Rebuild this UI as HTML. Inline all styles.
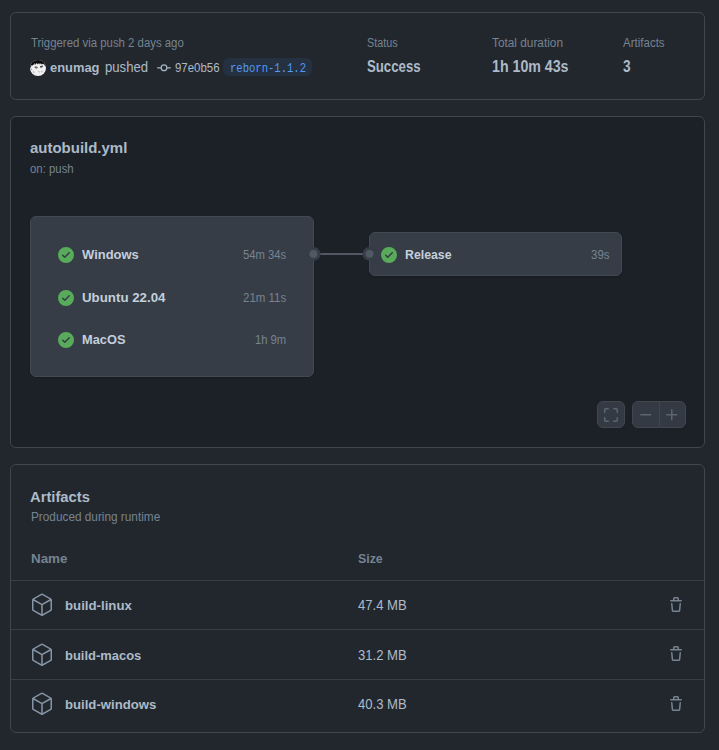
<!DOCTYPE html>
<html lang="en"><head><meta charset="utf-8"><title>autobuild.yml · Actions</title>
<style>
html,body{margin:0;padding:0}
html{background:#22272e}
body{width:719px;height:750px;background:#22272e;position:relative;overflow:hidden;font-family:"Liberation Sans",sans-serif;color:#adbac7}
.card{position:absolute;left:10px;width:695px;box-sizing:border-box;border:1px solid #3f4650;border-radius:6px}
.t{position:absolute;white-space:pre;transform-origin:0 50%;display:block}
.i{position:absolute;display:block;overflow:visible}
.box{position:absolute;box-sizing:border-box;background:#363d47;border:1px solid #414953;border-radius:6px;box-shadow:0 1px 2px rgba(0,0,0,.18)}
.edge{position:absolute;background:#4f5863}
.badge{position:absolute;border-radius:6px;background:#253040}
.sep{position:absolute;width:693px;height:1px;background:#373e47}
.btn{position:absolute;box-sizing:border-box;background:#333a43;border:1px solid #40474f}
</style></head><body>
<section class="card summary" style="top:12px;height:88px">
<div class="badge" style="left:212px;top:45px;width:89px;height:18px"></div>
<svg class="i" style="left:19px;top:47px" width="16" height="16" viewBox="0 0 16 16">
<defs><clipPath id="av"><circle cx="8" cy="8" r="8"/></clipPath></defs>
<g clip-path="url(#av)">
<rect width="16" height="16" fill="#f0f0f0"/>
<path d="M-1 8.6 0.7 7.6 1.6 5 2.5 5.8 3.2 4.2 4 5.2 4.7 3 5.7 4.9 6.4 2.8 7.4 4.6 8.1 2.9 9.1 4.4 10 3.1 11 4.5 11.9 3.4 12.9 4.6 14 3.8 14.8 5.8 17 7.4V-1H-1Z" fill="#0c0c0c"/>
<ellipse cx="6.2" cy="7.4" rx="1.7" ry="1" fill="#6a6a6a" transform="rotate(8 6.2 7.4)"/>
<ellipse cx="11.5" cy="6.6" rx="1.6" ry="1" fill="#444" transform="rotate(-18 11.5 6.6)"/>
<path d="M8.4 11.4l.9.5.9-.4" stroke="#9a9a9a" stroke-width=".7" fill="none"/>
<path d="M1 8.6l1 1.2M3 11.4l1.2 1.2M12.4 11l-.8 1.2" stroke="#a8a8a8" stroke-width="1.1" fill="none"/>
</g></svg>
<svg class="i" style="left:146.4px;top:47.7px" width="14" height="14" viewBox="0 0 16 16" fill="#a7b4c1"><path d="M11.93 8.5a4.002 4.002 0 0 1-7.86 0H.75a.75.75 0 0 1 0-1.5h3.32a4.002 4.002 0 0 1 7.86 0h3.32a.75.75 0 0 1 0 1.5Zm-1.43-.75a2.5 2.5 0 1 0-5 0 2.5 2.5 0 0 0 5 0Z"/></svg>
<span class="t" style="left:19.6px;top:24.14px;font:400 12px/12px 'Liberation Sans', sans-serif;color:#768390;transform:scaleX(0.9491)">Triggered via push 2 days ago</span>
<span class="t" style="left:39px;top:47.86px;font:700 13.4px/13.4px 'Liberation Sans', sans-serif;color:#adbac7;transform:scaleX(0.9641)">enumag</span>
<span class="t" style="left:93.7px;top:47.35px;font:400 14px/14px 'Liberation Sans', sans-serif;color:#adbac7;transform:scaleX(0.9382)">pushed</span>
<span class="t" style="left:163.8px;top:48.84px;font:400 12px/12px 'Liberation Sans', sans-serif;color:#adbac7;transform:scaleX(0.9525)">97e0b56</span>
<span class="t" style="left:219px;top:49.61px;font:400 12px/12px 'Liberation Mono', monospace;color:#539bf5;transform:scaleX(0.8794)">reborn-1.1.2</span>
<span class="t" style="left:356px;top:24.14px;font:400 12px/12px 'Liberation Sans', sans-serif;color:#768390;transform:scaleX(0.8992)">Status</span>
<span class="t" style="left:356px;top:45.83px;font:700 15.8px/15.8px 'Liberation Sans', sans-serif;color:#adbac7;transform:scaleX(0.8359)">Success</span>
<span class="t" style="left:480.6px;top:24.14px;font:400 12px/12px 'Liberation Sans', sans-serif;color:#768390;transform:scaleX(0.9855)">Total duration</span>
<span class="t" style="left:480.6px;top:45.83px;font:700 15.8px/15.8px 'Liberation Sans', sans-serif;color:#adbac7;transform:scaleX(0.8980)">1h 10m 43s</span>
<span class="t" style="left:611.9px;top:24.14px;font:400 12px/12px 'Liberation Sans', sans-serif;color:#768390;transform:scaleX(0.9598)">Artifacts</span>
<span class="t" style="left:611.9px;top:45.83px;font:700 15.8px/15.8px 'Liberation Sans', sans-serif;color:#adbac7;transform:scaleX(0.8639)">3</span>
</section>

<section class="card graph" style="top:116px;height:332px;background:#1c2128">
<div class="box" style="left:19px;top:99px;width:284px;height:161px"></div>
<div class="edge" style="left:303px;top:136px;width:55px;height:2px"></div>
<div class="box" style="left:358px;top:115px;width:253px;height:44px"></div>
<svg class="i" style="left:289px;top:123px" width="90" height="28" viewBox="300 240 90 28">
<circle cx="313.5" cy="253.9" r="7" fill="#363d47"/><circle cx="313.5" cy="253.9" r="4" fill="#4f5863"/>
<circle cx="369.6" cy="253.9" r="7" fill="#363d47"/><circle cx="369.6" cy="253.9" r="3.9" fill="#4f5863"/>
</svg>
<div class="btn" style="left:586px;top:284px;width:28px;height:27px;border-radius:6px"></div>
<div class="btn" style="left:621px;top:284px;width:28px;height:27px;border-radius:6px 0 0 6px"></div>
<div class="btn" style="left:648px;top:284px;width:27px;height:27px;border-radius:0 6px 6px 0"></div>
<svg class="i" style="left:47px;top:130px" width="16" height="16" viewBox="0 0 16 16" fill="#57ab5a"><path d="M8 16A8 8 0 1 1 8 0a8 8 0 0 1 0 16Zm3.78-9.72a.751.751 0 0 0-.018-1.042.751.751 0 0 0-1.042-.018L6.75 9.19 5.28 7.72a.751.751 0 0 0-1.042.018.751.751 0 0 0-.018 1.042l2 2a.75.75 0 0 0 1.06 0Z"/></svg>
<svg class="i" style="left:47px;top:172.7px" width="16" height="16" viewBox="0 0 16 16" fill="#57ab5a"><path d="M8 16A8 8 0 1 1 8 0a8 8 0 0 1 0 16Zm3.78-9.72a.751.751 0 0 0-.018-1.042.751.751 0 0 0-1.042-.018L6.75 9.19 5.28 7.72a.751.751 0 0 0-1.042.018.751.751 0 0 0-.018 1.042l2 2a.75.75 0 0 0 1.06 0Z"/></svg>
<svg class="i" style="left:47px;top:215.4px" width="16" height="16" viewBox="0 0 16 16" fill="#57ab5a"><path d="M8 16A8 8 0 1 1 8 0a8 8 0 0 1 0 16Zm3.78-9.72a.751.751 0 0 0-.018-1.042.751.751 0 0 0-1.042-.018L6.75 9.19 5.28 7.72a.751.751 0 0 0-1.042.018.751.751 0 0 0-.018 1.042l2 2a.75.75 0 0 0 1.06 0Z"/></svg>
<svg class="i" style="left:370px;top:130px" width="16" height="16" viewBox="0 0 16 16" fill="#57ab5a"><path d="M8 16A8 8 0 1 1 8 0a8 8 0 0 1 0 16Zm3.78-9.72a.751.751 0 0 0-.018-1.042.751.751 0 0 0-1.042-.018L6.75 9.19 5.28 7.72a.751.751 0 0 0-1.042.018.751.751 0 0 0-.018 1.042l2 2a.75.75 0 0 0 1.06 0Z"/></svg>
<svg class="i" style="left:592px;top:289.6px" width="16" height="16" viewBox="0 0 16 16" fill="#5c6570"><path d="M1.75 10a.75.75 0 0 1 .75.75v2.5c0 .138.112.25.25.25h2.5a.75.75 0 0 1 0 1.5h-2.5A1.75 1.75 0 0 1 1 13.25v-2.5a.75.75 0 0 1 .75-.75Zm12.5 0a.75.75 0 0 1 .75.75v2.5A1.75 1.75 0 0 1 13.25 15h-2.5a.75.75 0 0 1 0-1.5h2.5a.25.25 0 0 0 .25-.25v-2.5a.75.75 0 0 1 .75-.75ZM2.75 2.5a.25.25 0 0 0-.25.25v2.5a.75.75 0 0 1-1.5 0v-2.5C1 1.784 1.784 1 2.75 1h2.5a.75.75 0 0 1 0 1.5ZM10 1.75a.75.75 0 0 1 .75-.75h2.5c.966 0 1.75.784 1.75 1.75v2.5a.75.75 0 0 1-1.5 0v-2.5a.25.25 0 0 0-.25-.25h-2.5a.75.75 0 0 1-.75-.75Z"/></svg>
<svg class="i" style="left:626.8px;top:289.7px" width="16" height="16" viewBox="0 0 16 16" fill="#5c6570"><path d="M2 7.75A.75.75 0 0 1 2.75 7h10a.75.75 0 0 1 0 1.5h-10A.75.75 0 0 1 2 7.75Z"/></svg>
<svg class="i" style="left:653px;top:289.7px" width="16" height="16" viewBox="0 0 16 16" fill="#5c6570"><path d="M7.75 2a.75.75 0 0 1 .75.75V7h4.25a.75.75 0 0 1 0 1.5H8.5v4.25a.75.75 0 0 1-1.5 0V8.5H2.75a.75.75 0 0 1 0-1.5H7V2.75A.75.75 0 0 1 7.75 2Z"/></svg>
<span class="t" style="left:19.2px;top:23.05px;font:700 15.3px/15.3px 'Liberation Sans', sans-serif;color:#adbac7;transform:scaleX(0.9785)">autobuild.yml</span>
<span class="t" style="left:19.4px;top:45.74px;font:400 12px/12px 'Liberation Sans', sans-serif;color:#768390;transform:scaleX(0.9490)">on: push</span>
<span class="t" style="left:71.2px;top:130.57px;font:700 13.5px/13.5px 'Liberation Sans', sans-serif;color:#c3cfdb;transform:scaleX(0.9607)">Windows</span>
<span class="t" style="left:71px;top:173.77px;font:700 13.5px/13.5px 'Liberation Sans', sans-serif;color:#c3cfdb;transform:scaleX(0.9851)">Ubuntu 22.04</span>
<span class="t" style="left:71px;top:215.97px;font:700 13.5px/13.5px 'Liberation Sans', sans-serif;color:#c3cfdb;transform:scaleX(0.9502)">MacOS</span>
<span class="t" style="left:231.8px;top:131.84px;font:400 12px/12px 'Liberation Sans', sans-serif;color:#768390;transform:scaleX(0.9385)">54m 34s</span>
<span class="t" style="left:231.8px;top:174.54px;font:400 12px/12px 'Liberation Sans', sans-serif;color:#768390;transform:scaleX(0.9570)">21m 11s</span>
<span class="t" style="left:243.8px;top:217.24px;font:400 12px/12px 'Liberation Sans', sans-serif;color:#768390;transform:scaleX(0.9353)">1h 9m</span>
<span class="t" style="left:394px;top:130.57px;font:700 13.5px/13.5px 'Liberation Sans', sans-serif;color:#c3cfdb;transform:scaleX(0.9109)">Release</span>
<span class="t" style="left:580px;top:131.84px;font:400 12px/12px 'Liberation Sans', sans-serif;color:#768390;transform:scaleX(0.9556)">39s</span>
</section>

<section class="card artifacts" style="top:464px;height:269px">
<div class="sep" style="left:0px;top:114.5px"></div>
<div class="sep" style="left:0px;top:164px"></div>
<div class="sep" style="left:0px;top:214px"></div>
<svg class="i" style="left:19px;top:128.2px" width="24" height="24" viewBox="0 0 24 24" fill="#8695a6"><path d="M12.876.64V.639l8.25 4.763c.541.313.875.89.875 1.515v9.525a1.75 1.75 0 0 1-.875 1.516l-8.25 4.762a1.748 1.748 0 0 1-1.75 0l-8.25-4.763a1.75 1.75 0 0 1-.875-1.515V6.917c0-.625.334-1.202.875-1.515L11.126.64a1.748 1.748 0 0 1 1.75 0Zm-1 1.298L4.251 6.34l7.75 4.474 7.75-4.474-7.625-4.402a.248.248 0 0 0-.25 0Zm.875 19.123 7.625-4.402a.25.25 0 0 0 .125-.216V7.639l-7.75 4.474ZM3.501 7.64v8.803c0 .09.048.172.125.216l7.625 4.402v-8.947Z"/></svg>
<svg class="i" style="left:19px;top:177.7px" width="24" height="24" viewBox="0 0 24 24" fill="#8695a6"><path d="M12.876.64V.639l8.25 4.763c.541.313.875.89.875 1.515v9.525a1.75 1.75 0 0 1-.875 1.516l-8.25 4.762a1.748 1.748 0 0 1-1.75 0l-8.25-4.763a1.75 1.75 0 0 1-.875-1.515V6.917c0-.625.334-1.202.875-1.515L11.126.64a1.748 1.748 0 0 1 1.75 0Zm-1 1.298L4.251 6.34l7.75 4.474 7.75-4.474-7.625-4.402a.248.248 0 0 0-.25 0Zm.875 19.123 7.625-4.402a.25.25 0 0 0 .125-.216V7.639l-7.75 4.474ZM3.501 7.64v8.803c0 .09.048.172.125.216l7.625 4.402v-8.947Z"/></svg>
<svg class="i" style="left:19px;top:227.4px" width="24" height="24" viewBox="0 0 24 24" fill="#8695a6"><path d="M12.876.64V.639l8.25 4.763c.541.313.875.89.875 1.515v9.525a1.75 1.75 0 0 1-.875 1.516l-8.25 4.762a1.748 1.748 0 0 1-1.75 0l-8.25-4.763a1.75 1.75 0 0 1-.875-1.515V6.917c0-.625.334-1.202.875-1.515L11.126.64a1.748 1.748 0 0 1 1.75 0Zm-1 1.298L4.251 6.34l7.75 4.474 7.75-4.474-7.625-4.402a.248.248 0 0 0-.25 0Zm.875 19.123 7.625-4.402a.25.25 0 0 0 .125-.216V7.639l-7.75 4.474ZM3.501 7.64v8.803c0 .09.048.172.125.216l7.625 4.402v-8.947Z"/></svg>
<svg class="i" style="left:657px;top:131.5px" width="16" height="16" viewBox="0 0 16 16" fill="#768390"><path d="M11 1.75V3h2.25a.75.75 0 0 1 0 1.5H2.75a.75.75 0 0 1 0-1.5H5V1.75C5 .784 5.784 0 6.75 0h2.5C10.216 0 11 .784 11 1.75ZM4.496 6.675l.66 6.6a.25.25 0 0 0 .249.225h5.19a.25.25 0 0 0 .249-.225l.66-6.6a.75.75 0 0 1 1.492.149l-.66 6.6A1.748 1.748 0 0 1 10.595 15h-5.19a1.75 1.75 0 0 1-1.741-1.575l-.66-6.6a.75.75 0 1 1 1.492-.15ZM6.5 1.75V3h3V1.75a.25.25 0 0 0-.25-.25h-2.5a.25.25 0 0 0-.25.25Z"/></svg>
<svg class="i" style="left:657px;top:181.2px" width="16" height="16" viewBox="0 0 16 16" fill="#768390"><path d="M11 1.75V3h2.25a.75.75 0 0 1 0 1.5H2.75a.75.75 0 0 1 0-1.5H5V1.75C5 .784 5.784 0 6.75 0h2.5C10.216 0 11 .784 11 1.75ZM4.496 6.675l.66 6.6a.25.25 0 0 0 .249.225h5.19a.25.25 0 0 0 .249-.225l.66-6.6a.75.75 0 0 1 1.492.149l-.66 6.6A1.748 1.748 0 0 1 10.595 15h-5.19a1.75 1.75 0 0 1-1.741-1.575l-.66-6.6a.75.75 0 1 1 1.492-.15ZM6.5 1.75V3h3V1.75a.25.25 0 0 0-.25-.25h-2.5a.25.25 0 0 0-.25.25Z"/></svg>
<svg class="i" style="left:657px;top:231px" width="16" height="16" viewBox="0 0 16 16" fill="#768390"><path d="M11 1.75V3h2.25a.75.75 0 0 1 0 1.5H2.75a.75.75 0 0 1 0-1.5H5V1.75C5 .784 5.784 0 6.75 0h2.5C10.216 0 11 .784 11 1.75ZM4.496 6.675l.66 6.6a.25.25 0 0 0 .249.225h5.19a.25.25 0 0 0 .249-.225l.66-6.6a.75.75 0 0 1 1.492.149l-.66 6.6A1.748 1.748 0 0 1 10.595 15h-5.19a1.75 1.75 0 0 1-1.741-1.575l-.66-6.6a.75.75 0 1 1 1.492-.15ZM6.5 1.75V3h3V1.75a.25.25 0 0 0-.25-.25h-2.5a.25.25 0 0 0-.25.25Z"/></svg>
<span class="t" style="left:19.2px;top:24.25px;font:700 15.3px/15.3px 'Liberation Sans', sans-serif;color:#adbac7;transform:scaleX(0.9652)">Artifacts</span>
<span class="t" style="left:19.5px;top:46.14px;font:400 12px/12px 'Liberation Sans', sans-serif;color:#768390;transform:scaleX(0.9831)">Produced during runtime</span>
<span class="t" style="left:19.7px;top:86.66px;font:700 13.4px/13.4px 'Liberation Sans', sans-serif;color:#768390;transform:scaleX(1.0004)">Name</span>
<span class="t" style="left:346.5px;top:86.86px;font:700 13.4px/13.4px 'Liberation Sans', sans-serif;color:#768390;transform:scaleX(0.9217)">Size</span>
<span class="t" style="left:54.2px;top:133.86px;font:700 13.4px/13.4px 'Liberation Sans', sans-serif;color:#adbac7;transform:scaleX(0.9869)">build-linux</span>
<span class="t" style="left:54.2px;top:183.56px;font:700 13.4px/13.4px 'Liberation Sans', sans-serif;color:#adbac7;transform:scaleX(0.9674)">build-macos</span>
<span class="t" style="left:54.2px;top:232.66px;font:700 13.4px/13.4px 'Liberation Sans', sans-serif;color:#adbac7;transform:scaleX(0.9819)">build-windows</span>
<span class="t" style="left:346.5px;top:133.15px;font:400 14px/14px 'Liberation Sans', sans-serif;color:#adbac7;transform:scaleX(0.9340)">47.4 MB</span>
<span class="t" style="left:346.5px;top:182.85px;font:400 14px/14px 'Liberation Sans', sans-serif;color:#adbac7;transform:scaleX(0.9340)">31.2 MB</span>
<span class="t" style="left:346.5px;top:232.35px;font:400 14px/14px 'Liberation Sans', sans-serif;color:#adbac7;transform:scaleX(0.9340)">40.3 MB</span>
</section>
</body></html>
